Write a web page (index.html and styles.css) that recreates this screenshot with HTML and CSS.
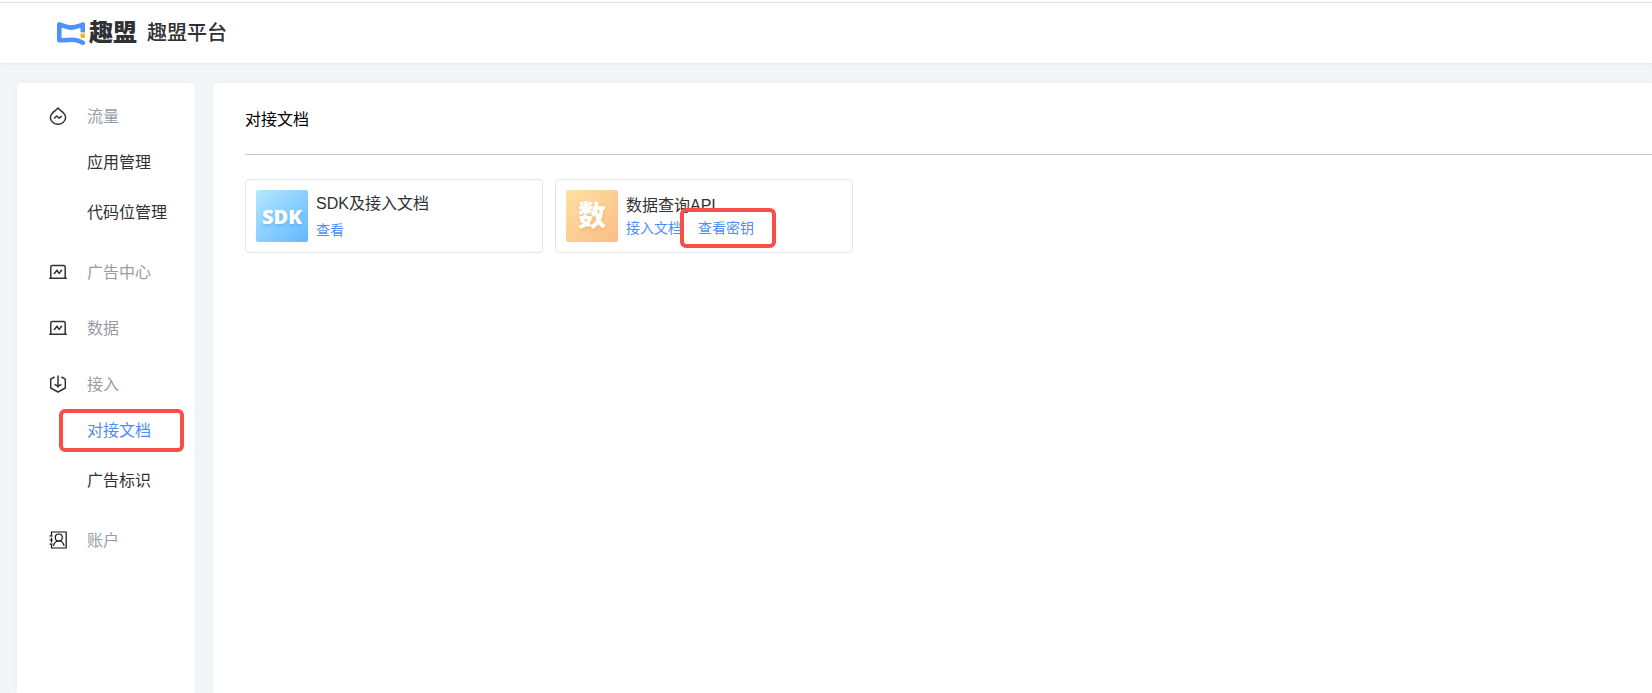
FILE: index.html
```html
<!DOCTYPE html>
<html lang="zh-CN">
<head>
    <meta charset="utf-8">
    <title>趣盟平台</title>
    <link rel="stylesheet" href="styles.css">
</head>
<body>
<header class="header">
    <svg class="logo" viewBox="0 0 28 23" width="28" height="23">
        <path d="M25.800 9.600V2.600C22 3.800 19 5.600 14.200 5.600C9.400 5.600 6 3.600 2.300 2.400V18.200C9 18.600 13 17 18.500 18C21.800 18.600 23.500 19.600 25.800 20.700" fill="none" stroke="#4d90fe" stroke-width="4.600" stroke-linecap="round" stroke-linejoin="round"/>
        <circle cx="25.800" cy="13.700" r="3.400" fill="#fff"/>
        <circle cx="25.800" cy="13.700" r="2.500" fill="#fbb80f"/>
    </svg>
    <span class="brand">趣盟</span>
    <h1 class="siteName">趣盟平台</h1>
</header>

<div class="wrap">
    <!-- 左侧菜单 -->
    <nav class="sidebar">
        <div class="group">
            <div class="groupTitle">
                <svg class="icon" viewBox="0 0 18 18">
                    <path d="M9 1C10.500 3 12.800 4.200 14.700 6.200C16 7.600 16.600 8.900 16.600 10.300A7.600 7 0 0 1 1.400 10.300C1.400 8.900 2 7.600 3.300 6.200C5.200 4.200 7.500 3 9 1Z"/>
                    <path d="M5.200 11.400L7.800 9L10.200 11.200L12.900 9"/>
                </svg>
                <span>流量</span>
            </div>
            <a class="item" href="#">应用管理</a>
            <a class="item" href="#">代码位管理</a>
        </div>
        <div class="group">
            <div class="groupTitle">
                <svg class="icon" viewBox="0 0 18 18">
                    <path d="M1.800 15V4Q1.800 2.500 3.300 2.500H14.700Q16.200 2.500 16.200 4V15M.2 15.200H17.800"/>
                    <path d="M5 11L8 7.200L10 10.400L13 6.800"/>
                </svg>
                <span>广告中心</span>
            </div>
        </div>
        <div class="group">
            <div class="groupTitle">
                <svg class="icon" viewBox="0 0 18 18">
                    <path d="M1.800 15V4Q1.800 2.500 3.300 2.500H14.700Q16.200 2.500 16.200 4V15M.2 15.200H17.800"/>
                    <path d="M5 11L8 7.200L10 10.400L13 6.800"/>
                </svg>
                <span>数据</span>
            </div>
        </div>
        <div class="group">
            <div class="groupTitle">
                <svg class="icon" viewBox="0 0 18 18">
                    <path d="M5.500 2L1.700 4.200V13L9 17L16.300 13V4.200L12.500 2"/>
                    <path d="M9 .5V12M5.500 9.600Q8 10 9 12Q10 10 12.500 9.600"/>
                </svg>
                <span>接入</span>
            </div>
            <a class="item active" href="#">对接文档</a>
            <a class="item" href="#">广告标识</a>
        </div>
        <div class="group">
            <div class="groupTitle">
                <svg class="icon account" viewBox="0 0 18 18">
                    <path d="M2.500 4V1H17.200V17H2.500V14M2.500 6.500V11.500"/>
                    <path d="M.5 4.800H3.600M.5 9H3.600M.5 13.200H3.600"/>
                    <circle cx="9.800" cy="6.500" r="3.500"/>
                    <path d="M4.400 14.800C5.200 11.800 7.400 10 9.800 10S14.400 11.800 15.200 14.800"/>
                </svg>
                <span>账户</span>
            </div>
        </div>
    </nav>

    <!-- 右侧内容 -->
    <main class="content">
        <h2 class="pageTitle">对接文档</h2>
        <div class="cards">
            <section class="card">
                <div class="cover blue">SDK</div>
                <div class="info">
                    <h3 class="cardTitle">SDK及接入文档</h3>
                    <div class="links"><a href="#">查看</a></div>
                </div>
            </section>
            <section class="card">
                <div class="cover orange">数</div>
                <div class="info tight">
                    <h3 class="cardTitle">数据查询API</h3>
                    <div class="links">
                        <a href="#">接入文档</a>
                        <a class="secret" href="#">查看密钥</a>
                    </div>
                </div>
            </section>
        </div>
    </main>
</div>
</body>
</html>
```
FILE: styles.css
```css
* {
    box-sizing: border-box;
    margin: 0;
    padding: 0;
}

body {
    display: flex;
    flex-direction: column;
    min-height: 100vh;
    padding-top: 2px;
    background-color: #fff;
    font-family: "Liberation Sans", "Noto Sans CJK SC", sans-serif;
    font-size: 16px;
    color: #303133;
}

a {
    color: inherit;
    text-decoration: none;
}

/* 顶部 */
.header {
    display: flex;
    align-items: center;
    height: 61px;
    padding-left: 57px;
    border-top: 1px solid #dcdee0;
}

.brand {
    margin: 0 10px 0 4px;
    font-size: 24px;
    line-height: 32px;
    font-weight: 900;
}

.siteName {
    font-size: 20px;
    line-height: 33px;
    font-weight: 500;
}

.wrap {
    flex: 1;
    display: flex;
    gap: 18px;
    padding: 20px 0 0 17px;
    background-color: #f2f6f9;
    box-shadow: inset 0 3px 4px -2px rgba(0, 21, 41, 0.06);
}

.sidebar,
.content {
    background-color: #fff;
    box-shadow: 0 0 6px rgba(0, 21, 41, 0.04);
}

/* 左侧菜单 */
.sidebar {
    flex: none;
    display: flex;
    flex-direction: column;
    gap: 14px;
    width: 178px;
    padding: 12px 0;
    border-radius: 4px 4px 0 0;
}

.groupTitle {
    display: flex;
    align-items: center;
    gap: 20px;
    height: 42px;
    padding-left: 32px;
    line-height: 23px;
    color: #989ca6;
}

.icon {
    width: 18px;
    height: 18px;
    fill: none;
    stroke: #333;
    stroke-width: 1.5;
    stroke-linejoin: round;
}

.account {
    stroke: #111;
    stroke-width: 1.2;
}

.item {
    display: block;
    position: relative;
    height: 50px;
    padding-left: 70px;
    line-height: 52px;
}

.active {
    color: #4d8dfc;
}

/* 红框标注 */
.active::after,
.secret::after {
    content: "";
    position: absolute;
    border: 4px solid #f74e49;
    border-radius: 6px;
}

.active::after {
    inset: 4px 11px 3px 42px;
}

.secret::after {
    inset: -10px -22px -10px -18px;
}

/* 右侧内容 */
.content {
    flex: 1;
    padding-left: 32px;
    border-radius: 4px 0 0 0;
}

.pageTitle {
    height: 72px;
    border-bottom: 1px solid #c5c7d0;
    font-size: 16px;
    line-height: 74px;
    font-weight: 400;
    color: #000;
}

.cards {
    display: flex;
    flex-wrap: wrap;
    gap: 12px;
    padding-top: 24px;
}

.card {
    display: flex;
    align-items: center;
    gap: 8px;
    width: 298px;
    height: 74px;
    padding: 0 10px;
    border: 1px solid #e3e4ec;
    border-radius: 4px;
}

.cover {
    width: 52px;
    height: 52px;
    border-radius: 2px;
    line-height: 54px;
    text-align: center;
    color: #fff;
}

.blue {
    background: linear-gradient(135deg, #b4e7ff, #62b8ff);
    font-family: "Noto Sans", "Open Sans", sans-serif;
    font-size: 20px;
    font-weight: 900;
    text-shadow: 0 2px 3px rgba(45, 140, 230, 0.35);
}

.orange {
    background: linear-gradient(135deg, #fde0a2, #fabd88);
    font-size: 28px;
    font-weight: 900;
    text-shadow: 0 2px 3px rgba(235, 135, 50, 0.35);
}

.info {
    display: flex;
    flex-direction: column;
    gap: 6px;
}

.tight {
    gap: 2px;
}

.cardTitle {
    font-size: 16px;
    line-height: 21px;
    font-weight: 400;
}

.links {
    display: flex;
    gap: 16px;
    font-size: 14px;
    line-height: 20px;
    color: #4d8dfc;
}

.secret {
    position: relative;
}
```
